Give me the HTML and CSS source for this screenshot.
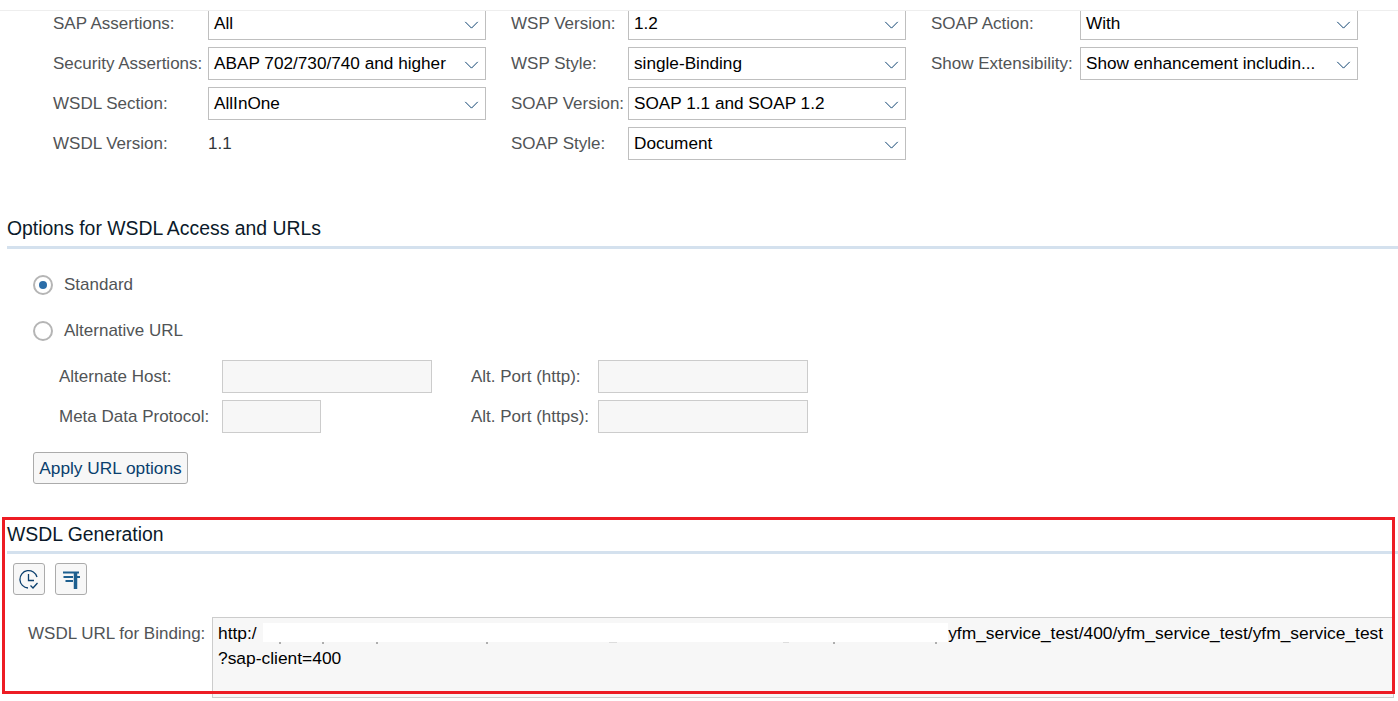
FILE: index.html
```html
<!DOCTYPE html>
<html>
	<head>
		<meta charset="utf-8" />
		<title>WSDL Generation</title>
		<link rel="stylesheet" href="styles.css">
	</head>
	<body>
		<div class="topbar"></div>

		<div class="settings">
			<div class="col col1">
				<div class="row">
					<span class="lbl">SAP Assertions:</span>
					<div class="sel"><span>All</span><svg class="chev" viewBox="0 0 16 9"><path d="M1 1l7 7 7-7"/></svg></div>
				</div>
				<div class="row">
					<span class="lbl">Security Assertions:</span>
					<div class="sel"><span>ABAP 702/730/740 and higher</span><svg class="chev" viewBox="0 0 16 9"><path d="M1 1l7 7 7-7"/></svg></div>
				</div>
				<div class="row">
					<span class="lbl">WSDL Section:</span>
					<div class="sel"><span>AllInOne</span><svg class="chev" viewBox="0 0 16 9"><path d="M1 1l7 7 7-7"/></svg></div>
				</div>
				<div class="row">
					<span class="lbl">WSDL Version:</span>
					<span class="val">1.1</span>
				</div>
			</div>
			<div class="col col2">
				<div class="row">
					<span class="lbl">WSP Version:</span>
					<div class="sel"><span>1.2</span><svg class="chev" viewBox="0 0 16 9"><path d="M1 1l7 7 7-7"/></svg></div>
				</div>
				<div class="row">
					<span class="lbl">WSP Style:</span>
					<div class="sel"><span>single-Binding</span><svg class="chev" viewBox="0 0 16 9"><path d="M1 1l7 7 7-7"/></svg></div>
				</div>
				<div class="row">
					<span class="lbl">SOAP Version:</span>
					<div class="sel"><span>SOAP 1.1 and SOAP 1.2</span><svg class="chev" viewBox="0 0 16 9"><path d="M1 1l7 7 7-7"/></svg></div>
				</div>
				<div class="row">
					<span class="lbl">SOAP Style:</span>
					<div class="sel"><span>Document</span><svg class="chev" viewBox="0 0 16 9"><path d="M1 1l7 7 7-7"/></svg></div>
				</div>
			</div>
			<div class="col col3">
				<div class="row">
					<span class="lbl">SOAP Action:</span>
					<div class="sel"><span>With</span><svg class="chev" viewBox="0 0 16 9"><path d="M1 1l7 7 7-7"/></svg></div>
				</div>
				<div class="row">
					<span class="lbl">Show Extensibility:</span>
					<div class="sel"><span>Show enhancement includin...</span><svg class="chev" viewBox="0 0 16 9"><path d="M1 1l7 7 7-7"/></svg></div>
				</div>
			</div>
		</div>

		<h2 class="head head-access">Options for WSDL Access and URLs</h2>

		<div class="options">
			<div class="radio-row">
				<span class="radio on"></span>
				<span class="lbl">Standard</span>
			</div>
			<div class="radio-row">
				<span class="radio"></span>
				<span class="lbl">Alternative URL</span>
			</div>
			<div class="alt-form">
				<span class="lbl">Alternate Host:</span>
				<div class="inp inp-host"></div>
				<span class="lbl">Alt. Port (http):</span>
				<div class="inp inp-port"></div>
				<span class="lbl">Meta Data Protocol:</span>
				<div class="inp inp-meta"></div>
				<span class="lbl">Alt. Port (https):</span>
				<div class="inp inp-port"></div>
			</div>
			<div class="btn">Apply URL options</div>
		</div>

		<h2 class="head">WSDL Generation</h2>

		<div class="tools">
			<div class="tool">
				<svg viewBox="0 0 20 20" width="20" height="20"><path d="M18 8A8.700 8.700 0 1 0 9 19" /><path d="M9.500 5v6.500h5.500" /><path d="M11.500 16.500l2.500 2.500 4.500-5" /></svg>
			</div>
			<div class="tool">
				<svg viewBox="0 0 20 20" width="20" height="20"><path class="bar" d="M2 3.500h16M2.500 8h9.500M4.500 12h7.500M16 8h3" /><path class="post" d="M14.500 3v17" /></svg>
			</div>
		</div>

		<div class="url-row">
			<span class="lbl">WSDL URL for Binding:</span>
			<div class="url-box">
				<div>http:/<svg class="redact" width="685" height="22" viewBox="0 0 685 22"><rect width="685" height="19" /><path d="M17 19v2M60 19v2M114 19v2M224 19v2M571 19v2M673 19v2" /><path class="faint" d="M346 19.500h8M520 19.500h6" /></svg>yfm_service_test/400/yfm_service_test/yfm_service_test</div>
				<div>?sap-client=400</div>
			</div>
		</div>

		<div class="mark"></div>
	</body>
</html>
```

FILE: styles.css
```css
*{
	margin:0px;
	padding:0px;
	box-sizing:border-box;
}
html,body{
	height:701px;
	overflow:hidden;
}
body{
	background:#fff;
	color:#32363a;
	font-family:"Liberation Sans",sans-serif;
	font-size:17px;
	position:relative;
}
.topbar{
	height:11px;
	border-bottom:1px solid #eee;
	background:#fff;
	position:relative;
	z-index:1;
}
.lbl{
	color:#515456;
	white-space:nowrap;
}
.settings{
	display:flex;
	height:204px;
	margin-top:-4px;
}
.col{
	flex:none;
}
.col1{
	width:511px;
	padding-left:53px;
}
.col2{
	width:420px;
}
.row{
	display:flex;
	align-items:center;
	height:33px;
	margin-bottom:7px;
}
.col1 .lbl{ width:155px; }
.col2 .lbl{ width:117px; }
.col3 .lbl{ width:149px; }
.sel{
	flex:none;
	width:278px;
	height:33px;
	border:1px solid #bfbfbf;
	padding:0 5px;
	display:flex;
	align-items:center;
	justify-content:space-between;
	color:#000;
	font-size:17.2px;
	white-space:nowrap;
}
.chev{
	width:15px;
	height:8px;
	margin:3px 1px 0 0;
	flex:none;
	fill:none;
	stroke:#0a3f6e;
	stroke-width:1.1;
}
.head{
	font-weight:normal;
	font-size:19.4px;
	color:#0b1a2a;
	margin-left:7px;
	height:37px;
	line-height:34px;
	border-bottom:3px solid #d4e1ee;
}
.head-access{
	height:38px;
}
.options{
	height:268px;
	padding:13px 0 0 33px;
}
.radio-row{
	display:flex;
	align-items:center;
	height:46px;
}
.radio{
	width:20px;
	height:20px;
	border:2px solid #b5b5b5;
	border-radius:50%;
	margin-right:11px;
	position:relative;
}
.radio.on::after{
	content:"";
	position:absolute;
	left:4px;
	top:4px;
	width:8px;
	height:8px;
	border-radius:50%;
	background:#2b6da8;
}
.alt-form{
	display:grid;
	grid-template-columns:163px 249px 127px 210px;
	grid-auto-rows:33px;
	row-gap:7px;
	align-items:center;
	margin:6px 0 0 26px;
}
.inp{
	height:33px;
	background:#f7f7f7;
	border:1px solid #ccc;
}
.inp-host{ width:210px; }
.inp-meta{ width:99px; }
.inp-port{ width:210px; }
.btn{
	width:155px;
	height:32px;
	margin-top:19px;
	border:1px solid #ababab;
	border-radius:3px;
	background:#f7f7f7;
	color:#0a3f6e;
	font-size:17.3px;
	text-align:center;
	line-height:30px;
	white-space:nowrap;
}
.tools{
	display:flex;
	gap:10px;
	padding:9px 0 0 13px;
}
.tool{
	width:32px;
	height:32px;
	border:1px solid #ababab;
	border-radius:3px;
	background:#f7f7f7;
	display:flex;
	align-items:center;
	justify-content:center;
}
.tool svg{
	fill:none;
	stroke:#0a3f6e;
	stroke-width:1.3;
}
.tool svg .bar{
	stroke:#1d5f8f;
	stroke-width:1.8;
}
.tool svg .post{
	stroke:#1d5f8f;
	stroke-width:3.5;
}
.url-row{
	display:flex;
	padding:22px 0 0 28px;
}
.url-row .lbl{
	width:184px;
	padding-top:7px;
}
.url-box{
	flex:none;
	width:1182px;
	height:81px;
	background:#f7f7f7;
	border:1px solid #ccc;
	padding:3px 5px;
	color:#000;
	font-size:17.4px;
	line-height:25px;
	white-space:nowrap;
}
.redact{
	fill:#fff;
	stroke:#666;
	stroke-width:1;
	vertical-align:top;
	margin:2px 0 0 6.500px;
}
.redact rect{
	stroke:none;
}
.redact .faint{
	stroke:#ddd;
}
.mark{
	position:absolute;
	left:2px;
	top:517px;
	width:1393px;
	height:177px;
	border:3px solid #ed1c24;
}
```
